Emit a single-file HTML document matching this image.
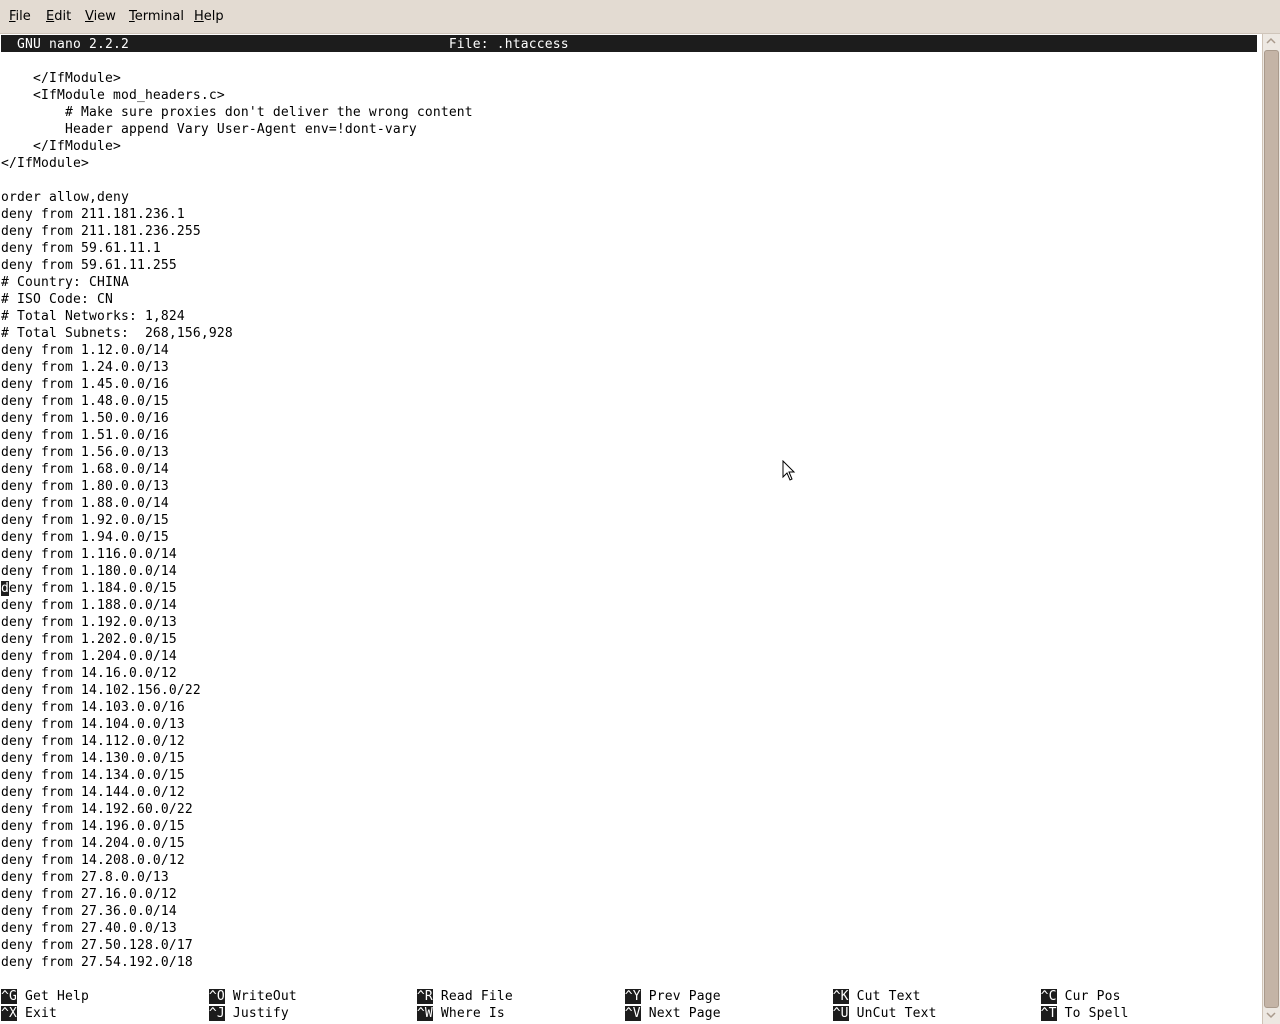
<!DOCTYPE html>
<html><head><meta charset="utf-8"><style>
body{margin:0;width:1280px;height:1024px;overflow:hidden;background:#fff;position:relative;font-family:"DejaVu Sans Mono","Liberation Mono",monospace}
#menu{position:absolute;left:0;top:0;width:1280px;height:33px;background:#e3dbd2;border-bottom:1px solid #cfc5ba;font-family:"DejaVu Sans","Liberation Sans",sans-serif;font-size:13px;color:#000}
#menu span{position:absolute;top:9px}
#menu u{text-decoration:underline}
pre{margin:0;position:absolute;left:1px;font-size:13px;letter-spacing:0.17px;line-height:17px;color:#000;font-family:"DejaVu Sans Mono",monospace}
#title{position:absolute;left:1px;top:35px;width:1256px;height:17px;background:#1c1c1c;color:#fff}
.k{background:#1c1c1c;color:#fff}
#sb{position:absolute;left:1262px;top:34px;width:18px;height:990px;background:#ede8e2;border-left:1px solid #cfc3b6}
#thumb{position:absolute;left:1264px;top:50px;width:13px;height:956px;background:#c4b4a6;border:1px solid #a99a8c;border-radius:3px}
</style></head><body>
<div id="menu">
<span style="left:9px"><u>F</u>ile</span>
<span style="left:46px"><u>E</u>dit</span>
<span style="left:85px"><u>V</u>iew</span>
<span style="left:129px"><u>T</u>erminal</span>
<span style="left:194px"><u>H</u>elp</span>
</div>
<div id="title"></div>
<pre style="top:36px;color:#fff">  GNU nano 2.2.2                                        File: .htaccess</pre>
<pre style="top:70px">    &lt;/IfModule&gt;
    &lt;IfModule mod_headers.c&gt;
        # Make sure proxies don't deliver the wrong content
        Header append Vary User-Agent env=!dont-vary
    &lt;/IfModule&gt;
&lt;/IfModule&gt;

order allow,deny
deny from 211.181.236.1
deny from 211.181.236.255
deny from 59.61.11.1
deny from 59.61.11.255
# Country: CHINA
# ISO Code: CN
# Total Networks: 1,824
# Total Subnets:  268,156,928
deny from 1.12.0.0/14
deny from 1.24.0.0/13
deny from 1.45.0.0/16
deny from 1.48.0.0/15
deny from 1.50.0.0/16
deny from 1.51.0.0/16
deny from 1.56.0.0/13
deny from 1.68.0.0/14
deny from 1.80.0.0/13
deny from 1.88.0.0/14
deny from 1.92.0.0/15
deny from 1.94.0.0/15
deny from 1.116.0.0/14
deny from 1.180.0.0/14
<span class="k">d</span>eny from 1.184.0.0/15
deny from 1.188.0.0/14
deny from 1.192.0.0/13
deny from 1.202.0.0/15
deny from 1.204.0.0/14
deny from 14.16.0.0/12
deny from 14.102.156.0/22
deny from 14.103.0.0/16
deny from 14.104.0.0/13
deny from 14.112.0.0/12
deny from 14.130.0.0/15
deny from 14.134.0.0/15
deny from 14.144.0.0/12
deny from 14.192.60.0/22
deny from 14.196.0.0/15
deny from 14.204.0.0/15
deny from 14.208.0.0/12
deny from 27.8.0.0/13
deny from 27.16.0.0/12
deny from 27.36.0.0/14
deny from 27.40.0.0/13
deny from 27.50.128.0/17
deny from 27.54.192.0/18</pre>
<pre style="top:988px"><span class="k">^G</span> Get Help               <span class="k">^O</span> WriteOut               <span class="k">^R</span> Read File              <span class="k">^Y</span> Prev Page              <span class="k">^K</span> Cut Text               <span class="k">^C</span> Cur Pos
<span class="k">^X</span> Exit                   <span class="k">^J</span> Justify                <span class="k">^W</span> Where Is               <span class="k">^V</span> Next Page              <span class="k">^U</span> UnCut Text             <span class="k">^T</span> To Spell</pre>
<div id="sb"></div>
<div id="thumb"></div>
<svg style="position:absolute;left:1265px;top:36px" width="12" height="10"><path d="M2 7 L6 3 L10 7" stroke="#a99a8c" stroke-width="1.5" fill="none"/></svg>
<svg style="position:absolute;left:1265px;top:1010px" width="12" height="10"><path d="M2 3 L6 7 L10 3" stroke="#a99a8c" stroke-width="1.5" fill="none"/></svg>
<svg style="position:absolute;left:782px;top:460px" width="14" height="22"><path d="M1 1 L1 17 L5 13 L8 20 L10 19 L7 12 L12 12 Z" fill="#fff" stroke="#000" stroke-width="1"/></svg>
</body></html>
